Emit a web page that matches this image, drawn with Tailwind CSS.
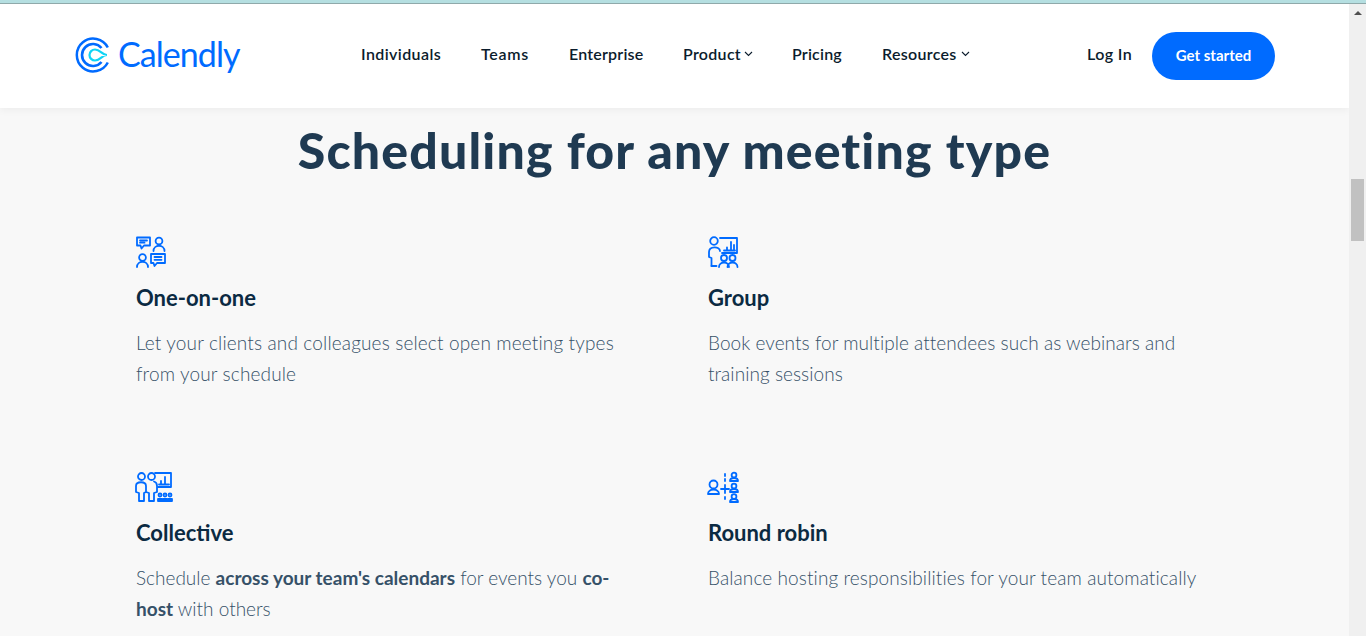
<!DOCTYPE html>
<html><head><meta charset="utf-8"><script src="https://cdn.jsdelivr.net/npm/@tailwindcss/browser@4"></script></head>
<body class="m-0 overflow-hidden">
<div class="w-[1366px] h-[636px] flex flex-col overflow-hidden font-['Lato','Noto_Sans',sans-serif] bg-[#f8f8f8]">
  <div class="h-1 shrink-0 bg-[#b5dfe1] border-b border-[#8fa9aa]"></div>
  <div class="flex flex-1 min-h-0">
    <main class="w-[1349px] flex flex-col overflow-hidden">
      <header class="h-[104px] shrink-0 bg-white shadow-[0_2px_8px_rgba(0,0,0,0.05)] relative flex items-center pl-[75px]">
        <svg class="w-[36px] h-[36px] shrink-0 relative -top-[1px]" viewBox="0 0 36 36" fill="none">
          <path d="M32.800 10.500A16.400 16.400 0 1 0 32.800 25.500" stroke="#006bff" stroke-width="2.500"/>
          <path d="M26.500 11A11 11 0 1 0 26.500 25" stroke="#006bff" stroke-width="2.600"/>
          <path d="M32 18c-5 0-6.500-5.500-12-5.500a5.500 5.500 0 0 0 0 11c5.500 0 7-5.500 12-5.500z" stroke="#0fd4f5" stroke-width="2.200"/>
        </svg>
        <span class="ml-[7px] w-[124px] text-[#006bff] text-[34px] leading-none tracking-[-0.95px] font-normal relative -top-[2px]">Calendly</span>
        <nav class="flex items-center ml-[119px] text-[16px] font-semibold text-[#0b1c2c] tracking-[0.3px] relative -top-[2px]">
          <a class="w-[80px] whitespace-nowrap tracking-[0.4px]">Individuals</a>
          <a class="ml-[40px] w-[48px] tracking-[0.7px]">Teams</a>
          <a class="ml-[40px] w-[74px] tracking-[0.2px]">Enterprise</a>
          <a class="ml-[40px] w-[69px] flex items-center gap-[3px]">Product<svg class="w-[9px] h-[6px] shrink-0" viewBox="0 0 9 6" fill="none"><path d="M1 1l3.500 3.500L8 1" stroke="#0b1c2c" stroke-width="1.100"/></svg></a>
          <a class="ml-[40px] w-[50px] tracking-[0.2px]">Pricing</a>
          <a class="ml-[40px] w-[87px] flex items-center gap-[4px]">Resources<svg class="w-[9px] h-[6px] shrink-0" viewBox="0 0 9 6" fill="none"><path d="M1 1l3.500 3.500L8 1" stroke="#0b1c2c" stroke-width="1.100"/></svg></a>
        </nav>
        <a class="ml-[118px] w-[45px] whitespace-nowrap text-[16px] font-semibold tracking-[0.4px] text-[#0b1c2c] relative -top-[2px]">Log In</a>
        <a class="ml-[20px] w-[123px] h-[48px] rounded-full bg-[#006bff] text-white text-[15px] font-bold flex items-center justify-center pb-[2px]">Get started</a>
      </header>
      <h1 class="mt-[12px] text-center text-[50px] leading-[60px] font-black tracking-[1.15px] text-[#1f3a52] whitespace-nowrap">Scheduling for any meeting type</h1>
      <div class="mt-[56px] pl-[136px] grid grid-cols-[572px_500px]">
        <section class="h-[235px]">
          <svg class="w-[32px] h-[32px] -ml-[1px]" viewBox="0 0 32 32" fill="none" stroke="#006bff" stroke-width="1.800" stroke-linejoin="round" stroke-linecap="round">
            <path d="M2 1.500h13v8h-6l-2.500 3-1-3H2z"/><path d="M5 4.500h7M5 6.700h4.500"/>
            <circle cx="24" cy="5" r="3.400"/><path d="M18.500 15c0-7 11-7 11 0"/>
            <circle cx="7.500" cy="21.500" r="3.400"/><path d="M2 31c0-7 11-7 11 0"/>
            <path d="M16 18h14v9h-8l-2.500 3-1-3H16z"/><path d="M19.500 21h7M19.500 23.800h7"/>
          </svg>
          <h2 class="mt-[15px] text-[22px] leading-[30px] font-bold text-[#0b2a42]">One-on-one</h2>
          <p class="mt-[14px] text-[19px] leading-[31px] font-light text-[#365168] tracking-[0.15px] whitespace-nowrap">Let your clients and colleagues select open meeting types<br>from your schedule</p>
        </section>
        <section class="h-[235px]">
          <svg class="w-[32px] h-[32px] -ml-[1px]" viewBox="0 0 32 32" fill="none" stroke="#006bff" stroke-width="1.800" stroke-linejoin="round" stroke-linecap="round">
            <circle cx="7" cy="5" r="3.800"/><path d="M4.500 30v-8L2 21v-5c0-6 11-6 11-1"/><path d="M4.500 30h5"/>
            <path d="M13 2h17v15H15"/><path d="M20 14.500v-3M24 14.500V6M27 14.500V9M17 14.500h11"/>
            <circle cx="17" cy="22" r="3"/><circle cx="25.500" cy="22" r="3"/><path d="M12 31c0-6 10-6 10 0M20.500 31c0-6 10-6 10 0"/>
          </svg>
          <h2 class="mt-[15px] text-[22px] leading-[30px] font-bold text-[#0b2a42]">Group</h2>
          <p class="mt-[14px] text-[19px] leading-[31px] font-light text-[#365168] tracking-[0.05px] whitespace-nowrap">Book events for multiple attendees such as webinars and<br>training sessions</p>
        </section>
        <section>
          <svg class="w-[38px] h-[32px] -ml-[1px]" viewBox="0 0 38 32" fill="none" stroke="#006bff" stroke-width="1.800" stroke-linejoin="round" stroke-linecap="round">
            <circle cx="6.500" cy="5.500" r="3.500"/><circle cx="16.500" cy="5.500" r="3.500"/>
            <path d="M4 30v-8l-3-1v-6c0-5 10-5 10 0v6l-2 1v8zM14 30v-8l-3-1M19 30v-8l3-1v-6c0-2-1-4-3-4.500M14 30h5"/>
            <path d="M20 2h16v14H23"/><path d="M26 13v-3M30 13V6M24 13.500h10"/>
            <circle cx="25" cy="24" r="1.500"/><circle cx="30" cy="24" r="1.500"/><circle cx="35" cy="24" r="1.500"/>
            <path d="M23 30v-2h4v2zM28 30v-2h4v2zM33 30v-2h4v2z"/>
          </svg>
          <h2 class="mt-[15px] text-[22px] leading-[30px] font-bold text-[#0b2a42]">Collective</h2>
          <p class="mt-[14px] text-[19px] leading-[31px] font-light text-[#365168] tracking-[0px] whitespace-nowrap">Schedule <b class="font-bold">across your team's calendars</b> for events you <b class="font-bold">co-<br>host</b> with others</p>
        </section>
        <section>
          <svg class="w-[32px] h-[32px] -ml-[1px]" viewBox="0 0 32 32" fill="none" stroke="#006bff" stroke-width="1.800" stroke-linejoin="round" stroke-linecap="round">
            <circle cx="6.500" cy="13.500" r="4"/><path d="M1 23c0-6 11-6 11 0z"/>
            <path d="M14 18h8M18 14v8M18 3v2M18 8v2M18 26v2" />
            <circle cx="27" cy="4" r="2.400"/><path d="M23 10c0-4 8-4 8 0z"/>
            <circle cx="27" cy="15" r="2.400"/><path d="M23 21c0-4 8-4 8 0z"/>
            <circle cx="27" cy="25.500" r="2.400"/><path d="M23 31c0-4 8-4 8 0z"/>
          </svg>
          <h2 class="mt-[15px] text-[22px] leading-[30px] font-bold text-[#0b2a42]">Round robin</h2>
          <p class="mt-[14px] text-[19px] leading-[31px] font-light text-[#365168] tracking-[0.1px] whitespace-nowrap">Balance hosting responsibilities for your team automatically</p>
        </section>
      </div>
    </main>
    <aside class="w-[17px] bg-[#f0f0f0] flex flex-col items-center">
      <div class="mt-[7px] w-0 h-0 border-x-[4px] border-x-transparent border-b-[4px] border-b-[#505050]"></div>
      <div class="mt-[164px] w-[13px] h-[62px] bg-[#c1c1c1]"></div>
    </aside>
  </div>
</div>
</body></html>
